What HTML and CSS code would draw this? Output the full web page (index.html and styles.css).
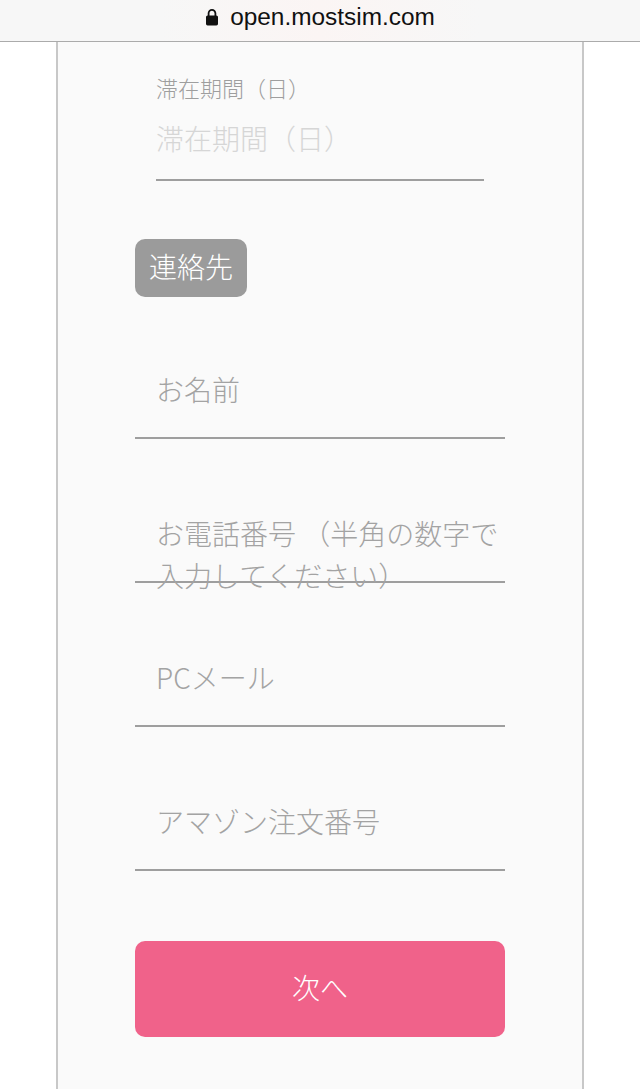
FILE: index.html
```html
<!DOCTYPE html>
<html lang="ja">
<head>
  <meta charset="UTF-8" />
  <meta name="viewport" content="width=device-width, initial-scale=1.0" />
  <title>open.mostsim.com</title>
  <link rel="stylesheet" href="styles.css">
</head>
<body>
  <header class="url-bar">
    <svg class="lock-icon" viewBox="0 0 14 18">
      <path d="M3.6 8V5.2a3.4 3.4 0 0 1 6.8 0V8" fill="none" stroke="#111" stroke-width="1.8"/>
      <rect x="1" y="7.4" width="12" height="10" rx="1.6" fill="#111"/>
    </svg>
    <span class="url-text">open.mostsim.com</span>
  </header>

  <main class="panel">
    <form class="form">
      <div class="field field-stay">
        <label class="field-label">滞在期間（日）</label>
        <div class="field-value">滞在期間（日）</div>
      </div>

      <div class="section-tag">連絡先</div>

      <div class="contact-fields">
        <div class="field field-contact">
          <div class="field-hint">お名前</div>
        </div>
        <div class="field field-contact">
          <div class="field-hint">お電話番号 （半角の数字で入力してください）</div>
        </div>
        <div class="field field-contact">
          <div class="field-hint">PCメール</div>
        </div>
        <div class="field field-contact">
          <div class="field-hint">アマゾン注文番号</div>
        </div>
      </div>

      <button type="button" class="next-button">次へ</button>
    </form>
  </main>
</body>
</html>
```

FILE: styles.css
```css
* { box-sizing: border-box; margin: 0; padding: 0; }

html, body {
  height: 100%;
  background: #fff;
  overflow: hidden;
  font-family: "Noto Sans CJK JP", "Noto Sans", sans-serif;
  font-weight: 300;
}

.url-bar {
  height: 42px;
  display: flex;
  align-items: center;
  justify-content: center;
  gap: 11px;
  padding-bottom: 8px;
  background: linear-gradient(90deg, #f7f7f7 25%, #fbf5f4 50%, #f7f7f7 75%);
  border-bottom: 1px solid #ababab;
}

.lock-icon {
  width: 14px;
  height: 18px;
}

.url-text {
  font-family: "Liberation Sans", Arial, sans-serif;
  font-weight: 400;
  font-size: 24.4px;
  color: #111;
}

.panel {
  width: 528px;
  height: 1047px;
  margin: 0 auto;
  background: #fafafa;
  border-left: 2px solid #c8c8c8;
  border-right: 2px solid #c8c8c8;
}

.form {
  width: 370px;
  margin: 0 auto;
}

.field {
  border-bottom: 2px solid #9e9e9e;
}

.field-stay {
  width: 328px;
  height: 139px;
  margin-left: 21px;
  padding-top: 30px;
}

.field-label {
  display: block;
  font-size: 22px;
  line-height: 30px;
  color: #9e9e9e;
}

.field-value {
  font-size: 28px;
  line-height: 40px;
  margin-top: 16px;
  color: #d6d6d6;
}

.section-tag {
  width: 112px;
  height: 58px;
  margin-top: 58px;
  border-radius: 10px;
  background: #9b9b9b;
  color: #fff;
  font-size: 28px;
  line-height: 54px;
  text-align: center;
}

.contact-fields {
  margin-top: 2px;
}

.field-contact {
  height: 144px;
  padding: 73px 0 0 21px;
}

.field-contact:first-child {
  height: 140px;
  padding-top: 69px;
}

.field-hint {
  font-size: 28px;
  line-height: 42px;
  color: #a3a3a3;
}

.next-button {
  display: block;
  width: 100%;
  height: 96px;
  margin-top: 70px;
  padding-bottom: 4px;
  border: none;
  border-radius: 10px;
  background: #f0628a;
  color: #fff;
  font-family: inherit;
  font-weight: 300;
  font-size: 28px;
}
```
